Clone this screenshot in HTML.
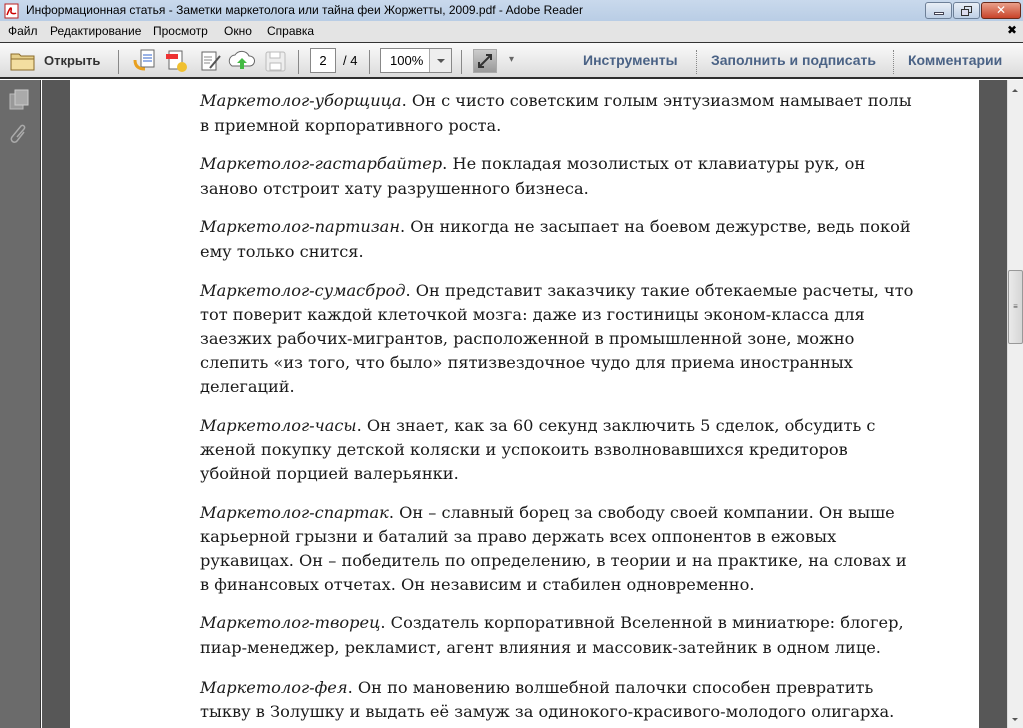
<!DOCTYPE html>
<html><head><meta charset="utf-8"><style>
*{margin:0;padding:0;box-sizing:border-box}
body{width:1023px;height:728px;overflow:hidden;position:relative;background:#fff;font-family:"Liberation Sans","DejaVu Sans",sans-serif}
.abs{position:absolute}
#title{left:0;top:0;width:1023px;height:21px;background:linear-gradient(#c9d9ec,#b9cde5);}
#menu{left:0;top:21px;width:1023px;height:21px;background:#e4e4e4;font-size:12px;color:#000}
#tb{left:0;top:42px;width:1023px;height:37px;background:linear-gradient(#fafafa,#dcdcdc);border-top:1px solid #333;border-bottom:2px solid #2e2e2e}
.lines{position:absolute;left:200px;top:2px;}
.line{position:absolute;left:200px;font-family:"DejaVu Serif","Liberation Serif",serif;font-size:16.2px;line-height:20px;color:#1a1a1a;white-space:nowrap;margin-top:2px}
.line i{font-style:italic}
.tl{color:#4a6285;font-weight:bold;font-size:14px;top:52px}
.sep{position:absolute;top:50px;width:1px;height:24px;background:#888}
.dsep{position:absolute;top:50px;height:24px;border-left:1px dotted #888}
</style></head><body>
<div id="title" class="abs">
  <svg class="abs" style="left:4px;top:3px" width="16" height="16"><rect x="1" y="1" width="13" height="14" fill="#fff" stroke="#b22"/><path d="M3 12 C6 4 8 3 7 8 C6 11 11 11 12 10" stroke="#c00" stroke-width="1.5" fill="none"/></svg>
  <div class="abs" style="left:26px;top:3px;font-size:12px;color:#000">Информационная статья - Заметки маркетолога или тайна феи Жоржетты, 2009.pdf - Adobe Reader</div>
  <div class="abs" style="left:925px;top:2px;width:27px;height:17px;border:1px solid #6d7f97;border-radius:3px;background:linear-gradient(#e8eef6,#bfd0e6)"><div style="position:absolute;left:8px;top:9px;width:10px;height:3px;background:#fff;border:1px solid #445"></div></div>
  <div class="abs" style="left:953px;top:2px;width:27px;height:17px;border:1px solid #6d7f97;border-radius:3px;background:linear-gradient(#e8eef6,#bfd0e6)"><div style="position:absolute;left:10px;top:3px;width:8px;height:7px;border:1px solid #333"></div><div style="position:absolute;left:7px;top:6px;width:8px;height:7px;border:1px solid #333;background:#dde"></div></div>
  <div class="abs" style="left:981px;top:2px;width:40px;height:17px;border:1px solid #6a2a1a;border-radius:3px;background:linear-gradient(#e9a08a,#c8432a);color:#fff;font-weight:bold;font-size:12px;text-align:center;line-height:15px">✕</div>
</div>
<div id="menu" class="abs">
  <span class="abs" style="left:8px;top:3px">Файл</span>
  <span class="abs" style="left:50px;top:3px">Редактирование</span>
  <span class="abs" style="left:153px;top:3px">Просмотр</span>
  <span class="abs" style="left:224px;top:3px">Окно</span>
  <span class="abs" style="left:267px;top:3px">Справка</span>
  <span class="abs" style="left:1007px;top:2px;font-weight:bold;font-size:12px">✖</span>
</div>
<div id="tb" class="abs"></div>
<svg class="abs" style="left:10px;top:50px" width="26" height="22"><path d="M1 4h8l2 2h13v14H1z" fill="#e6cf8a" stroke="#8a6b2a"/><path d="M1 9h23v11H1z" fill="#f3dea0" stroke="#8a6b2a"/></svg>
<div class="abs" style="left:44px;top:53px;font-size:13px;font-weight:bold;color:#333">Открыть</div>
<div class="sep" style="left:118px"></div>
<svg class="abs" style="left:132px;top:48px" width="130" height="26">
 <rect x="9" y="2" width="13" height="17" fill="#fff" stroke="#666"/><path d="M11 7h9M11 10h9M11 13h9" stroke="#36c"/><path d="M3 12 q0 9 10 9" stroke="#e8a020" stroke-width="3" fill="none"/>
 <rect x="37" y="3" width="13" height="18" fill="#fff" stroke="#666"/><rect x="34" y="6" width="12" height="5" fill="#e33"/><circle cx="50" cy="19" r="5" fill="#f0c030"/>
 <rect x="70" y="4" width="14" height="18" fill="#fff" stroke="#666"/><path d="M72 9h8M72 12h8M72 15h6" stroke="#888"/><path d="M78 20l10-12" stroke="#555" stroke-width="2"/>
 <path d="M100 18a6 6 0 0 1 3-11 8 8 0 0 1 14 1 5 5 0 0 1 1 10z" fill="#fff" stroke="#666"/><path d="M110 10l-5 5h3v6h4v-6h3z" fill="#4b4"/>
</svg>
<svg class="abs" style="left:265px;top:51px" width="22" height="22"><rect x="1" y="1" width="19" height="19" rx="2" fill="#eee" stroke="#bbb"/><rect x="5" y="1" width="10" height="6" fill="#fff" stroke="#bbb"/><rect x="5" y="12" width="11" height="7" fill="#fff" stroke="#bbb"/></svg>
<div class="sep" style="left:298px"></div>
<div class="abs" style="left:310px;top:48px;width:26px;height:25px;background:#fff;border:1px solid #888;font-size:13px;text-align:center;line-height:23px">2</div>
<div class="abs" style="left:343px;top:53px;font-size:13px">/ 4</div>
<div class="sep" style="left:369px"></div>
<div class="abs" style="left:380px;top:48px;width:72px;height:25px;background:#fff;border:1px solid #888;font-size:13px;line-height:23px;padding-left:9px">100%<div style="position:absolute;right:0;top:0;width:22px;height:23px;border-left:1px solid #aaa;background:#eee"><div style="position:absolute;left:7px;top:10px;border:4px solid transparent;border-top:4px solid #555"></div></div></div>
<div class="sep" style="left:461px"></div>
<div class="abs" style="left:473px;top:49px;width:24px;height:24px;border:1px solid #aaa;background:linear-gradient(#ccc,#999)"><svg width="22" height="22"><path d="M5 17L17 5M12 5h5v5M5 12v5h5" stroke="#333" stroke-width="2" fill="none"/></svg></div>
<div class="abs" style="left:509px;top:54px;font-size:10px;color:#666">▾</div>
<div class="abs tl" style="left:583px">Инструменты</div>
<div class="dsep" style="left:696px"></div>
<div class="abs tl" style="left:711px">Заполнить и подписать</div>
<div class="dsep" style="left:893px"></div>
<div class="abs tl" style="left:908px">Комментарии</div>

<div class="abs" style="left:0;top:80px;width:41px;height:648px;background:#6b6b6b;border-right:1px solid #3a3a3a"></div>
<svg class="abs" style="left:8px;top:88px" width="24" height="60"><rect x="2" y="6" width="13" height="15" fill="#999" stroke="#bbb"/><rect x="7" y="2" width="13" height="15" fill="#aaa" stroke="#ccc"/><path d="M16 44l-7 9a3 3 0 0 1-5-4l9-11a2 2 0 0 1 3 3l-7 8" stroke="#aaa" stroke-width="1.5" fill="none"/></svg>
<div class="abs" style="left:42px;top:80px;width:28px;height:648px;background:#575757"></div>
<div class="abs" style="left:979px;top:80px;width:28px;height:648px;background:#575757"></div>
<div class="abs" style="left:1007px;top:80px;width:16px;height:648px;background:#efefef;border-left:1px solid #ddd"></div>
<div class="abs" style="left:1012px;top:86px;border:3px solid transparent;border-bottom:3px solid #555"></div>
<div class="abs" style="left:1008px;top:270px;width:15px;height:74px;border:1px solid #999;border-radius:2px;background:linear-gradient(90deg,#eaeaea,#d6d6d6);font-size:8px;text-align:center;line-height:72px;color:#555">≡</div>
<div class="abs" style="left:1012px;top:718px;border:3px solid transparent;border-top:3px solid #555"></div>

<div class="line" style="top:89px"><i>Маркетолог-уборщица</i>. Он с чисто советским голым энтузиазмом намывает полы</div>
<div class="line" style="top:114px">в приемной корпоративного роста.</div>
<div class="line" style="top:152px"><i>Маркетолог-гастарбайтер</i>. Не покладая мозолистых от клавиатуры рук, он</div>
<div class="line" style="top:177px">заново отстроит хату разрушенного бизнеса.</div>
<div class="line" style="top:215px"><i>Маркетолог-партизан</i>. Он никогда не засыпает на боевом дежурстве, ведь покой</div>
<div class="line" style="top:240px">ему только снится.</div>
<div class="line" style="top:279px"><i>Маркетолог-сумасброд</i>. Он представит заказчику такие обтекаемые расчеты, что</div>
<div class="line" style="top:303px">тот поверит каждой клеточкой мозга: даже из гостиницы эконом-класса для</div>
<div class="line" style="top:327px">заезжих рабочих-мигрантов, расположенной в промышленной зоне, можно</div>
<div class="line" style="top:351px">слепить «из того, что было» пятизвездочное чудо для приема иностранных</div>
<div class="line" style="top:375px">делегаций.</div>
<div class="line" style="top:414px"><i>Маркетолог-часы</i>. Он знает, как за 60 секунд заключить 5 сделок, обсудить с</div>
<div class="line" style="top:438px">женой покупку детской коляски и успокоить взволновавшихся кредиторов</div>
<div class="line" style="top:462px">убойной порцией валерьянки.</div>
<div class="line" style="top:501px"><i>Маркетолог-спартак</i>. Он – славный борец за свободу своей компании. Он выше</div>
<div class="line" style="top:525px">карьерной грызни и баталий за право держать всех оппонентов в ежовых</div>
<div class="line" style="top:549px">рукавицах. Он – победитель по определению, в теории и на практике, на словах и</div>
<div class="line" style="top:573px">в финансовых отчетах. Он независим и стабилен одновременно.</div>
<div class="line" style="top:611px"><i>Маркетолог-творец</i>. Создатель корпоративной Вселенной в миниатюре: блогер,</div>
<div class="line" style="top:636px">пиар-менеджер, рекламист, агент влияния и массовик-затейник в одном лице.</div>
<div class="line" style="top:676px"><i>Маркетолог-фея</i>. Он по мановению волшебной палочки способен превратить</div>
<div class="line" style="top:700px">тыкву в Золушку и выдать её замуж за одинокого-красивого-молодого олигарха.</div>
</body></html>
